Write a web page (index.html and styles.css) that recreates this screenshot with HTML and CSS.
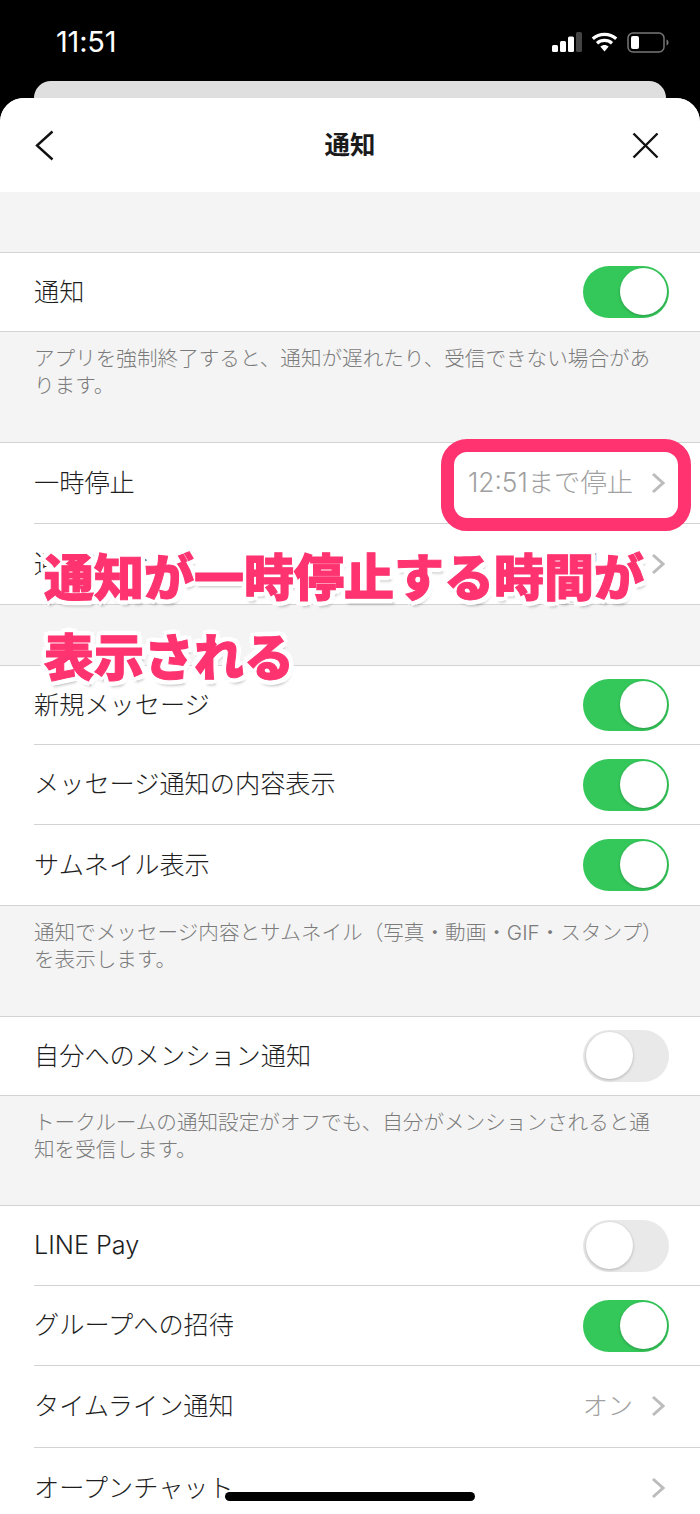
FILE: index.html
```html
<!DOCTYPE html>
<html lang="ja">
<head>
<meta charset="utf-8">
<title>通知</title>
<link rel="stylesheet" href="styles.css">
</head>
<body>
<div class="phone">
  <div class="status">
    <span class="time">11:51</span>
    <div class="status-icons">
      <svg class="signal" width="31" height="20" viewBox="0 0 31 20"><rect x="0" y="13" width="6" height="7" rx="1.5" fill="#fff"/><rect x="8" y="9" width="6" height="11" rx="1.5" fill="#fff"/><rect x="16" y="4.500" width="6" height="15.500" rx="1.500" fill="#fff"/><rect x="24" y="0" width="6" height="20" rx="1.500" fill="#444"/></svg>
      <svg class="wifi" width="27" height="20" viewBox="0 0 27 20"><path d="M1.800 6.800C8.300.8 18.700.8 25.200 6.800M6 11.200c4.200-3.800 10.800-3.800 15 0" fill="none" stroke="#fff" stroke-width="3.200"/><path d="M9.300 14.600c2.400-2.100 6-2.100 8.400 0L13.500 19.500z" fill="#fff"/></svg>
      <svg class="battery" width="42" height="21" viewBox="0 0 42 21"><rect x="1" y="1" width="36" height="19" rx="5" fill="none" stroke="#777" stroke-width="1.500"/><rect x="4" y="4" width="8" height="13" rx="2" fill="#fff"/><path d="M39.500 7.500c1.500.5 2 1.800 2 3s-.5 2.500-2 3z" fill="#777"/></svg>
    </div>
  </div>
  <div class="peek"></div>
  <main class="sheet">
    <header class="nav">
      <svg class="nav-icon nav-back" width="19" height="31" viewBox="0 0 19 31"><path d="M17.500 1.500 2 15.500l15.500 14" fill="none" stroke="#111" stroke-width="2.400"/></svg>
      <h1 class="title">通知</h1>
      <svg class="nav-icon nav-close" width="27" height="27" viewBox="0 0 27 27"><path d="M1.500 1.500l24 24M25.500 1.500l-24 24" fill="none" stroke="#111" stroke-width="2.400"/></svg>
    </header>
    <div class="gap-top"></div>

    <section class="group">
      <div class="row h78"><span class="label">通知</span><span class="toggle on"></span></div>
    </section>
    <p class="note">アプリを強制終了すると、通知が遅れたり、受信できない場合があります。</p>

    <section class="group">
      <div class="row h81"><span class="label">一時停止</span><span class="value">12:51まで停止</span><svg class="chev" width="14" height="22" viewBox="0 0 14 22"><path d="M2 2l10 9-10 9" fill="none" stroke="#bcbcbc" stroke-width="3"/></svg></div>
      <div class="row"><span class="label">通知サウンド</span><span class="value">デフォルト</span><svg class="chev" width="14" height="22" viewBox="0 0 14 22"><path d="M2 2l10 9-10 9" fill="none" stroke="#bcbcbc" stroke-width="3"/></svg></div>
    </section>
    <div class="gap-mid"></div>

    <section class="group">
      <div class="row h79"><span class="label">新規メッセージ</span><span class="toggle on"></span></div>
      <div class="row"><span class="label">メッセージ通知の内容表示</span><span class="toggle on"></span></div>
      <div class="row"><span class="label">サムネイル表示</span><span class="toggle on"></span></div>
    </section>
    <p class="note">通知でメッセージ内容とサムネイル（写真・動画・GIF・スタンプ）を表示します。</p>

    <section class="group">
      <div class="row h78"><span class="label">自分へのメンション通知</span><span class="toggle"></span></div>
    </section>
    <p class="note note-short">トークルームの通知設定がオフでも、自分がメンションされると通知を受信します。</p>

    <section class="group">
      <div class="row"><span class="label">LINE Pay</span><span class="toggle"></span></div>
      <div class="row"><span class="label">グループへの招待</span><span class="toggle on"></span></div>
      <div class="row h82"><span class="label">タイムライン通知</span><span class="value value-short">オン</span><svg class="chev" width="14" height="22" viewBox="0 0 14 22"><path d="M2 2l10 9-10 9" fill="none" stroke="#bcbcbc" stroke-width="3"/></svg></div>
      <div class="row"><span class="label">オープンチャット</span><svg class="chev" width="14" height="22" viewBox="0 0 14 22"><path d="M2 2l10 9-10 9" fill="none" stroke="#bcbcbc" stroke-width="3"/></svg></div>
    </section>
  </main>

  <div class="callout-box"></div>
  <div class="callout-text">通知が一時停止する時間が<br>表示される</div>
  <div class="home-bar"></div>
</div>
</body>
</html>
```
FILE: styles.css
```css
* { box-sizing: border-box; }
html, body { margin: 0; padding: 0; background: #000; }
body { font-family: Inter, "Noto Sans CJK JP", "Noto Sans", sans-serif; }
.phone { position: relative; width: 700px; height: 1514px; overflow: hidden; background: #000; }

.status { height: 81px; display: flex; justify-content: space-between; padding: 32px 31px 0 56px; color: #fff; }
.time { font-family: Inter, "Liberation Sans", sans-serif; font-size: 29px; font-weight: 400; line-height: 20px; letter-spacing: -0.2px; }
.status-icons { display: flex; align-items: flex-start; gap: 9px; }
.signal { margin-right: -1px; }

.peek { height: 17px; margin: 0 34px; background: #dfdfdf; border-radius: 18px 18px 0 0; }

.sheet { background: #f4f4f4; border-radius: 24px 24px 0 0; overflow: hidden; }
.nav { height: 94px; background: #fff; display: grid; grid-template-columns: 1fr auto 1fr; align-items: center; padding: 0 41px; }
.nav-back { margin-left: -6px; }
.nav-close { justify-self: end; }
.title { margin: 0; font-size: 25.500px; font-weight: 700; color: #1a1a1a; line-height: 1.2; }
.gap-top { height: 60px; }
.gap-mid { height: 60px; }

.group { background: #fff; border-top: 1px solid #d3d3d3; border-bottom: 1px solid #d3d3d3; }
.row { height: 80px; margin-left: 34px; padding-right: 31px; display: flex; align-items: center; border-bottom: 1px solid #d3d3d3; }
.row:last-child { border-bottom: 0; }
.h78 { height: 78px; }
.h79 { height: 79px; }
.h81 { height: 81px; }
.h82 { height: 82px; }

.label { flex: 1; font-size: 25.200px; color: #1e1e1e; line-height: 30px; font-weight: 300; margin-bottom: 1px; }
.value { font-size: 26.300px; color: #a0a0a0; line-height: 30px; font-weight: 300; margin: 0 18px 1px 0; }
.value-short { font-size: 25.200px; }
.chev { flex: none; margin-right: 4px; margin-bottom: 1px; }

.toggle { position: relative; flex: none; width: 86px; height: 52px; border-radius: 26px; background: #e9e9ea; }
.toggle::after { content: ""; position: absolute; left: 3px; top: 2px; width: 47px; height: 47px; border-radius: 50%; background: #fff; box-shadow: 0 1px 3px rgba(0,0,0,.25); }
.toggle.on { background: #34c85a; }
.toggle.on::after { left: 37px; }

.note { margin: 0; height: 110px; padding: 13px 34px 0; font-size: 20.600px; line-height: 27px; color: #7b7b7b; font-weight: 300; }
.note-short { height: 109px; }

.callout-box { position: absolute; left: 441px; top: 439px; width: 250px; height: 92px; border: 13px solid #fe3370; border-radius: 26px; }
.callout-text { position: absolute; left: 44px; top: 534px; font-family: "Noto Sans CJK JP", sans-serif; font-size: 50px; line-height: 80px; font-weight: 900; color: #fe3370; -webkit-text-stroke: 1px #fe3370; text-shadow: 5px 0 0 #fff, -5px 0 0 #fff, 0 5px 0 #fff, 0 -5px 0 #fff, 4px 4px 0 #fff, -4px 4px 0 #fff, 4px -4px 0 #fff, -4px -4px 0 #fff, 3px 2px 0 #fff, -3px 2px 0 #fff, 3px -2px 0 #fff, -3px -2px 0 #fff, 2px 6px 3px rgba(0,0,0,.25); white-space: nowrap; }

.home-bar { position: absolute; left: 225px; top: 1492px; width: 250px; height: 9px; border-radius: 5px; background: #000; }
```
